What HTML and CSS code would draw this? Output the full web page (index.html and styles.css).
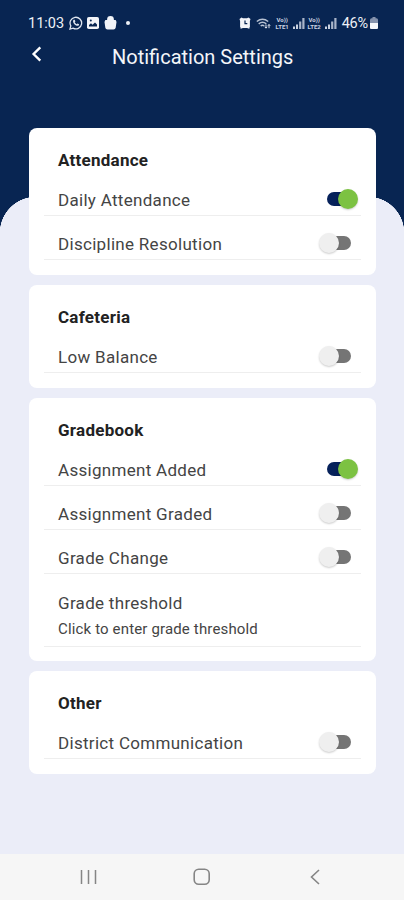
FILE: index.html
```
<!DOCTYPE html>
<html lang="en">
<head>
	<meta charset="UTF-8">
	<title>Notification Settings</title>
	<link rel="stylesheet" href="styles.css">
</head>
<body>
<div class="phone">
	<div class="status">
		<span class="time">11:03</span>
		<svg class="whatsapp" width="14" height="14" viewBox="0 0 14 14"><path d="M1 13l.8-3.1A5.8 5.8 0 1 1 4 12.1z" fill="none" stroke="#dfe5ef" stroke-width="1.3"/><path d="M4.6 3.8c-1.2 1.4-.4 3.2 1 4.6 1.5 1.4 3.2 2 4.3.8l.2-.9-1.6-.9-.9.8C6.7 7.8 6 7 5.7 6.3l.7-.8-.7-1.7z" fill="#dfe5ef"/></svg>
		<svg class="photo" width="12" height="12" viewBox="0 0 12 12"><rect width="12" height="12" rx="1.8" fill="#f2f4f8"/><path d="M2 9.500V8l2-1.800 1.500 1.500L8 5.500l2 2v2z" fill="#082552"/><circle cx="3.800" cy="3.600" r="1" fill="#082552"/></svg>
		<svg class="bag" width="13" height="14" viewBox="0 0 12 14"><path d="M3.500 5V3.500a2.500 2.500 0 0 1 5 0V5" fill="#f2f4f8" stroke="#f2f4f8" stroke-width="1.800"/><path d="M.8 4h10.400l.8 2-.8 5.500q-.3 2-2.200 2H3q-1.900 0-2.200-2L0 6z" fill="#f2f4f8"/></svg>
		<span class="dot"></span>
		<div class="right">
			<svg width="12" height="12" viewBox="0 0 12 12"><path d="M.5 2L2.500.5 4 1.200h4L9.500.5l2 1.500-.6 2v6.500H10l.8 1H9l-.6-.6H3.600l-.6.6H1.200l.8-1h-.9V4z" fill="#f2f4f8"/><path d="M6 3.500v3.200h2.300" fill="none" stroke="#082552" stroke-width="1.200"/></svg>
			<svg class="wifi" width="15" height="11" viewBox="0 0 15 11"><path d="M.8 3.500q5.700-4.500 11.400 0M2.700 5.800q3.800-3 7.600 0M4.700 8q1.800-1.400 3.600 0" fill="none" stroke="#b8c2d3" stroke-width="1.500"/><path d="M10 10V6.500M8.800 8.800L10 10.200l1.200-1.400M13 10.200V6.500M11.900 7.800L13 6.500l1.200 1.300" fill="none" stroke="#dfe5ef"/></svg>
			<span class="lte"><b>Vo))</b><b>LTE1</b></span>
			<svg class="bars" width="12" height="11" viewBox="0 0 12 11"><path d="M1 11V8.500M4 11V6.500" stroke="#dfe5ef" stroke-width="1.800"/><path d="M7.200 11V3.500M10.400 11V0" stroke="#a9b5c9" stroke-width="2.200"/></svg>
			<span class="lte"><b>Vo))</b><b>LTE2</b></span>
			<svg class="bars" width="12" height="11" viewBox="0 0 12 11"><path d="M1 11V8.500M4 11V6.500" stroke="#dfe5ef" stroke-width="1.800"/><path d="M7.200 11V3.500M10.400 11V0" stroke="#a9b5c9" stroke-width="2.200"/></svg>
			<span class="percent">46%</span>
			<svg class="battery" width="8" height="12" viewBox="0 0 8 12"><rect x="2.500" width="3" height="2" fill="#8593ad"/><rect y="1.200" width="8" height="10.800" rx="1.500" fill="#8593ad"/><path d="M0 6h8v4.500Q8 12 6.500 12h-5Q0 12 0 10.500z" fill="#f5f7fa"/></svg>
		</div>
	</div>

	<div class="header">
		<svg class="back" width="12" height="16" viewBox="0 0 12 16"><path d="M10.300 1.300L3.600 8l6.700 6.700" fill="none" stroke="#fff" stroke-width="2.400"/></svg>
		<h1>Notification Settings</h1>
	</div>

	<div class="content">
		<div class="card">
			<h2>Attendance</h2>
			<div class="row"><span>Daily Attendance</span><i class="switch on"></i></div>
			<div class="row"><span>Discipline Resolution</span><i class="switch"></i></div>
		</div>
		<div class="card">
			<h2>Cafeteria</h2>
			<div class="row"><span>Low Balance</span><i class="switch"></i></div>
		</div>
		<div class="card gradebook">
			<h2>Gradebook</h2>
			<div class="row"><span>Assignment Added</span><i class="switch on"></i></div>
			<div class="row"><span>Assignment Graded</span><i class="switch"></i></div>
			<div class="row"><span>Grade Change</span><i class="switch"></i></div>
			<div class="row threshold">
				<span>Grade threshold</span>
				<small>Click to enter grade threshold</small>
			</div>
		</div>
		<div class="card">
			<h2>Other</h2>
			<div class="row"><span>District Communication</span><i class="switch"></i></div>
		</div>
	</div>

	<div class="navbar">
		<svg width="18" height="16" viewBox="0 0 18 16"><path d="M1.500 1v14M8.500 1v14M15.500 1v14" stroke="#858585" stroke-width="1.500"/></svg>
		<svg width="18" height="18" viewBox="0 0 18 18"><rect x="1.200" y="1.200" width="15" height="15" rx="4.500" fill="none" stroke="#858585" stroke-width="1.600"/></svg>
		<svg width="18" height="16" viewBox="0 0 18 16"><path d="M13 1L5.500 8l7.500 7" fill="none" stroke="#858585" stroke-width="1.600"/></svg>
	</div>
</div>
</body>
</html>
```
FILE: styles.css
```
body{
	margin: 0;
	font-family: Roboto, sans-serif;
}
.phone{
	width: 404px;
	height: 900px;
	overflow: hidden;
	display: flex;
	flex-direction: column;
	/* navy behind the rounded top of the content */
	background: linear-gradient(#082552 300px, #ebedf8 300px);
}
/* status bar */
.status{
	height: 32px;
	padding: 14px 26px 0 28px;
	box-sizing: border-box;
	display: flex;
	align-items: center;
	color: #eef1f6;
}
.time,
.percent{
	padding-top: 1px;
	font-size: 14.5px;
	line-height: 18px;
}
.time{
	width: 36px;
}
.whatsapp{
	margin-left: 5px;
}
.photo{
	margin-left: 4px;
}
.bag{
	margin-left: 5px;
}
.dot{
	width: 4px;
	height: 4px;
	margin-left: 9px;
	border-radius: 50%;
	background: #eef1f6;
}
.right{
	margin-left: auto;
	display: flex;
	align-items: center;
}
.wifi{
	margin-left: 5px;
}
.lte{
	width: 15px;
	margin-left: 4px;
	font-size: 6px;
	line-height: 7px;
	text-align: center;
	white-space: nowrap;
	color: #ccd4e1;
}
.lte b{
	display: block;
}
.bars{
	margin-left: 3px;
}
.lte + .bars + .lte{
	margin-left: 2px;
}
.percent{
	margin-left: 5px;
	letter-spacing: -0.2px;
}
.battery{
	margin-left: 2px;
}
/* title */
.header{
	height: 96px;
	box-sizing: border-box;
	padding: 12px 0 0 30px;
	display: flex;
	align-items: flex-start;
}
.back{
	margin-top: 2px;
}
.header h1{
	margin: 0 0 0 70px;
	color: #f4f6f9;
	font-size: 20px;
	line-height: 26px;
	font-weight: 400;
	white-space: nowrap;
}
.content{
	flex: 1;
	padding: 0 28px 0 29px;
	background: radial-gradient(circle at 36px 105px, #ebedf8 36px, transparent 36.5px) 0 0 / 36px 105px no-repeat,
		radial-gradient(circle at 0 105px, #ebedf8 36px, transparent 36.5px) 100% 0 / 36px 105px no-repeat,
		linear-gradient(#ebedf8, #ebedf8) 0 105px no-repeat;
}
.card{
	height: 103px;
	margin-bottom: 10px;
	padding: 0 15px;
	box-sizing: border-box;
	border-radius: 8px;
	background: #fff;
}
.card:first-child{
	height: 147px;
}
.card.gradebook{
	height: 263px;
}
.card h2{
	height: 44px;
	margin: 0;
	padding: 21px 14px 0;
	box-sizing: border-box;
	font-size: 17px;
	line-height: 22px;
	letter-spacing: 0.25px;
	font-weight: 700;
	color: #222;
}
.row{
	height: 44px;
	padding: 10px 0 0 14px;
	box-sizing: border-box;
	border-bottom: 1px solid #eee;
	display: flex;
	align-items: center;
	justify-content: space-between;
	font-size: 17px;
	letter-spacing: 0.3px;
	color: #444;
}
.row span{
	padding-top: 3px;
}
.threshold{
	height: 73px;
	padding-top: 16px;
	display: block;
}
.threshold span,
.threshold small{
	display: block;
	padding: 0;
	line-height: 26px;
}
.threshold small{
	font-size: 15px;
	letter-spacing: 0.15px;
}
/* toggles */
.switch{
	width: 24px;
	height: 14px;
	margin-right: 10px;
	border-radius: 7px;
	background: #757575;
	position: relative;
}
.switch:after{
	content: "";
	position: absolute;
	top: -3px;
	left: -8px;
	width: 20px;
	height: 20px;
	border-radius: 50%;
	background: #efefef;
	box-shadow: 0 1px 2px rgba(0,0,0,0.2);
}
.switch.on{
	background: #06215a;
}
.switch.on:after{
	left: 11px;
	background: #7cc242;
}
/* android buttons */
.navbar{
	height: 46px;
	padding: 0 80px;
	display: flex;
	align-items: center;
	justify-content: space-between;
	background: #f6f6f6;
}
```
